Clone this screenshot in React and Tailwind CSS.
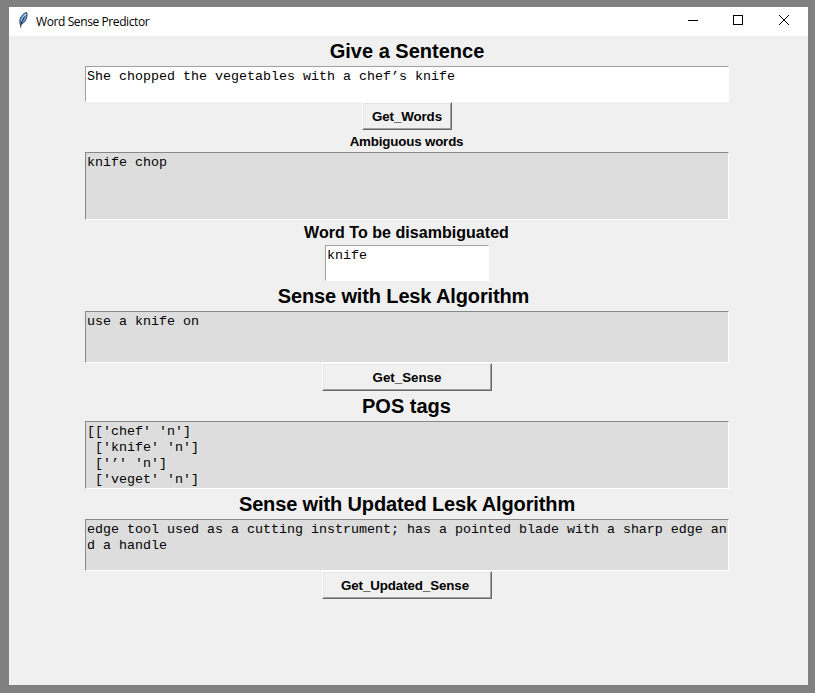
const boxBase =
  "shrink-0 overflow-hidden border border-r-white border-b-white pl-px pt-0.5 font-['Liberation_Mono',monospace] text-[13.33px] leading-4 whitespace-pre";

function Heading({ children, className }) {
  return (
    <h2 className={`flex shrink-0 items-center justify-center font-bold whitespace-nowrap ${className}`}>
      {children}
    </h2>
  );
}

function TextBox({ children, className }) {
  return <div className={`${boxBase} ${className}`}>{children}</div>;
}

function Button({ children, className, textClass = "" }) {
  return (
    <button
      className={`h-7 shrink-0 border border-t-white border-l-white border-r-[#696969] border-b-[#696969] bg-[#f0f0f0] ${className}`}
    >
      <span className={`flex h-full items-center justify-center border border-t-[#e3e3e3] border-l-[#e3e3e3] border-r-[#a0a0a0] border-b-[#a0a0a0] pt-px text-[13.33px] font-bold ${textClass}`}>
        {children}
      </span>
    </button>
  );
}

function Feather() {
  return (
    <svg className="ml-[9px] mb-1 h-4 w-[11px]" viewBox="0 0 11 16">
      <path d="M2.5 13C1 9 2 5 5 2.5C6.500 1 8 .3 8.700 .5C9.600 2.500 9 6 7.500 8.500C6.500 10.300 5 11.500 3.500 12Z" fill="#5b93d3" stroke="#26303c" strokeWidth=".8" />
      <path d="M7.700 2C6 4 4.500 6.500 3.500 9" fill="none" stroke="#a9d3f5" strokeWidth="1.300" />
      <path d="M6.500 4.500C4.500 8 3 11 2.500 15.500" fill="none" stroke="#111" strokeWidth=".9" />
    </svg>
  );
}

export default function App() {
  return (
    <div className="h-[693px] w-[815px] overflow-hidden bg-[#808080] pt-[7px] pl-[9px] font-['Liberation_Sans',Arial,sans-serif] text-black">
      <div className="flex h-[678px] w-[799px] flex-col bg-[#f0f0f0]">
        <header className="flex h-[29px] shrink-0 items-center bg-white">
          <Feather />
          <span className="ml-[7px] font-['Open_Sans','Noto_Sans',sans-serif] text-[12px] tracking-[-0.4px]">
            Word Sense Predictor
          </span>
          <svg className="mr-[17px] mb-[5px] ml-auto h-[12px] w-[103px]" viewBox="0 0 103 12" fill="none" stroke="#000" shapeRendering="crispEdges">
            <path d="M0 7.500H10M45.500 2.500H54.500V11.500H45.500Z" />
            <path d="M91 2L101 12M101 2L91 12" shapeRendering="auto" />
          </svg>
        </header>
        <main className="mr-[3px] flex flex-col items-center">
          <Heading className="h-[30px] text-[20px]">Give a Sentence</Heading>
          <TextBox className="h-9 w-[644px] border-t-[#a0a0a0] border-l-[#a0a0a0] bg-white">
            She chopped the vegetables with a chef’s knife
          </TextBox>
          <Button className="w-[90px]" textClass="tracking-[-0.1px]">Get_Words</Button>
          <Heading className="h-[22px] pt-0.5 pr-px text-[13.33px] tracking-[-0.17px]">Ambiguous words</Heading>
          <TextBox className="h-[68px] w-[644px] border-t-[#868888] border-l-[#868888] bg-[#dddddd]">knife chop</TextBox>
          <Heading className="h-[25px] pr-px text-[16px] tracking-[0.04px]">Word To be disambiguated</Heading>
          <TextBox className="h-9 w-[164px] border-t-[#a0a0a0] border-l-[#a0a0a0] bg-white">knife</TextBox>
          <Heading className="h-[30px] pr-[7px] text-[20px] tracking-[-0.14px]">Sense with Lesk Algorithm</Heading>
          <TextBox className="h-[52px] w-[644px] border-t-[#868888] border-l-[#868888] bg-[#dddddd]">use a knife on</TextBox>
          <Button className="w-[170px]">Get_Sense</Button>
          <Heading className="h-[30px] pr-px text-[20px]">POS tags</Heading>
          <TextBox className="h-[68px] w-[644px] border-t-[#868888] border-l-[#868888] bg-[#dddddd]">
            {"[['chef' 'n']\n ['knife' 'n']\n ['’' 'n']\n ['veget' 'n']"}
          </TextBox>
          <Heading className="h-[30px] text-[20px] tracking-[-0.13px]">Sense with Updated Lesk Algorithm</Heading>
          <TextBox className="h-[52px] w-[644px] border-t-[#868888] border-l-[#868888] bg-[#dddddd]">
            {"edge tool used as a cutting instrument; has a pointed blade with a sharp edge an\nd a handle"}
          </TextBox>
          <Button className="w-[170px]" textClass="pr-1 tracking-[-0.1px]">Get_Updated_Sense</Button>
        </main>
      </div>
    </div>
  );
}
